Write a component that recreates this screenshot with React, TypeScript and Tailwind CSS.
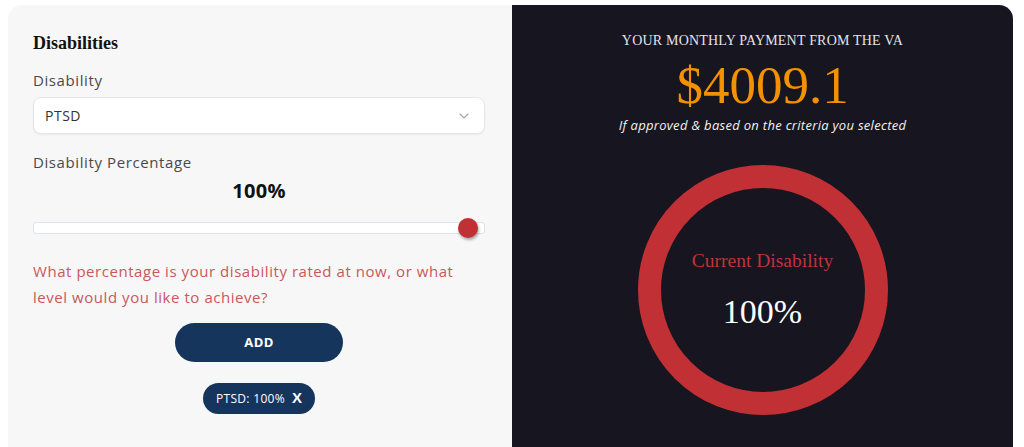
import React from "react";
import { ChevronDown } from "lucide-react";

const sans = { fontFamily: '"Open Sans", "Liberation Sans", sans-serif' };
const serif = { fontFamily: '"Liberation Serif", "DejaVu Serif", serif' };

export default function App() {
  return (
    <div className="w-[1024px] h-[447px] overflow-hidden bg-white pt-[5px] pl-[8px]" style={sans}>
      <div className="grid grid-cols-[504px_501px] h-[470px]">
        {/* Left panel */}
        <div className="bg-[#f7f7f7] rounded-tl-[14px] pl-[25px] pr-[27px] pt-[27px] flex flex-col">
          <h2 className="text-[18px] leading-[22px] font-bold text-[#111]" style={serif}>
            Disabilities
          </h2>
          <div className="mt-[16px] text-[15px] leading-[20px] tracking-[0.6px] text-[#4a4a4a]">Disability</div>
          <div className="mt-[7px] h-[37px] bg-white rounded-[8px] border border-[#e6e6e6] shadow-[0_1px_2px_rgba(0,0,0,0.06)] flex items-center justify-between pl-[11px] pr-[12px]">
            <span className="text-[14px] tracking-[0.5px] text-[#333]">PTSD</span>
            <ChevronDown size={16} strokeWidth={1.6} className="text-[#a8a8a8]" />
          </div>
          <div className="mt-[18px] text-[15px] leading-[20px] tracking-[0.6px] text-[#4a4a4a]">Disability Percentage</div>
          <div className="mt-[7px] text-center text-[20px] leading-[24px] font-bold tracking-[0.3px] text-[#111]">100%</div>
          <div className="mt-[19px] relative h-[12px]">
            <div className="h-[12px] bg-white border border-[#dde3ea] rounded-[3px]" />
            <div className="absolute right-[7px] top-[-4px] w-[20px] h-[20px] rounded-full bg-[#c03034] shadow-[1px_2px_3px_rgba(0,0,0,0.35)]" />
          </div>
          <p className="mt-[24px] text-[15px] leading-[26px] tracking-[0.55px] text-[#c9585d]">
            What percentage is your disability rated at now, or what level would you like to achieve?
          </p>
          <div className="mt-[13px] flex justify-center">
            <button className="w-[168px] h-[39px] rounded-full bg-[#15355c] text-white text-[13px] font-bold tracking-[0.4px]">
              ADD
            </button>
          </div>
          <div className="mt-[21px] flex justify-center">
            <div className="h-[31px] px-[13px] rounded-full bg-[#15355c] text-white flex items-center gap-[7px]">
              <span className="text-[12px] tracking-[0.3px]">PTSD: 100%</span>
              <span className="text-[15px] font-bold" style={{ fontFamily: '"Liberation Sans", sans-serif' }}>X</span>
            </div>
          </div>
        </div>

        {/* Right panel */}
        <div className="bg-[#17151f] rounded-tr-[14px] flex flex-col items-center pt-[27px]">
          <div className="text-[14px] leading-[18px] tracking-[0.2px] text-[#e4e4ea]" style={serif}>
            YOUR MONTHLY PAYMENT FROM THE VA
          </div>
          <div className="mt-[7px] text-[53px] leading-[56px] text-[#f39200]" style={serif}>
            $4009.1
          </div>
          <div className="mt-[4px] text-[13px] leading-[16px] italic tracking-[0.3px] text-[#f2f2f2]">
            If approved &amp; based on the criteria you selected
          </div>
          <div className="mt-[32px] w-[250px] h-[250px] rounded-full border-[23px] border-[#c03034] flex flex-col items-center justify-center">
            <div className="text-[19.5px] leading-[22px] text-[#c0333a]" style={serif}>
              Current Disability
            </div>
            <div className="mt-[22px] text-[34px] leading-[36px] text-white" style={serif}>
              100%
            </div>
          </div>
        </div>
      </div>
    </div>
  );
}
